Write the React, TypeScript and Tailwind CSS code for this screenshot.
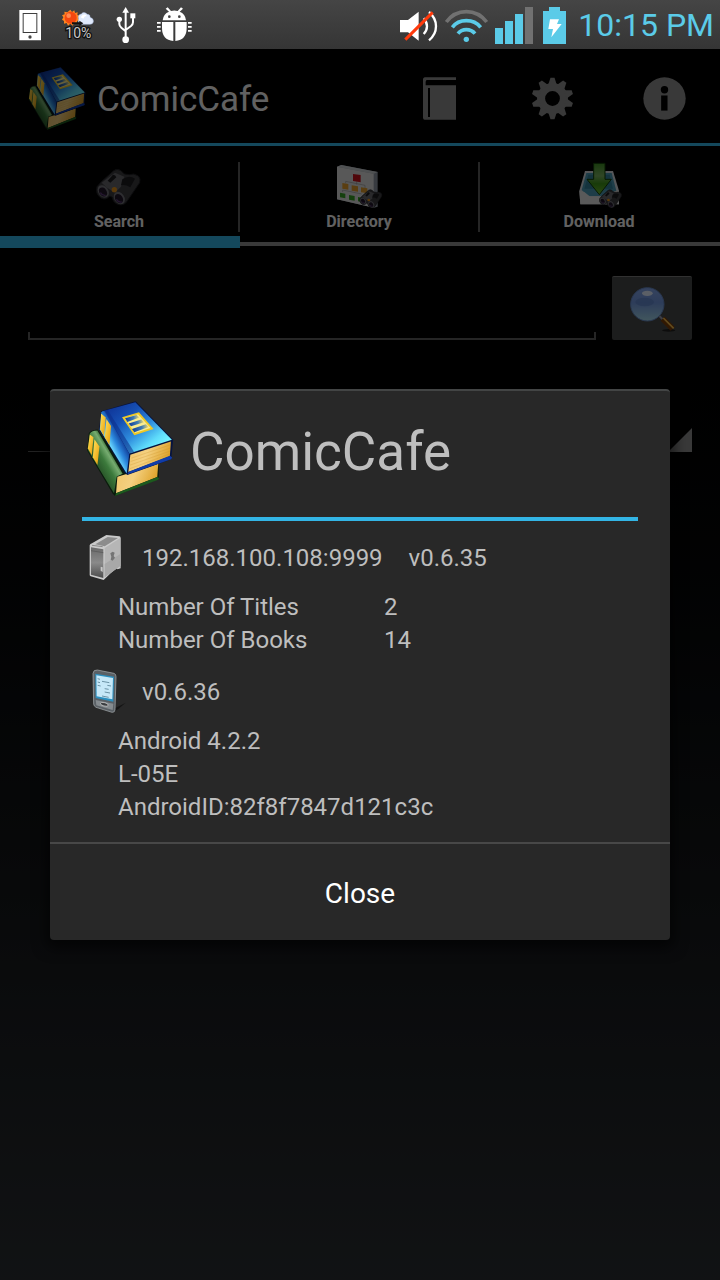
import React from "react";

function Books({ className }: { className?: string }) {
  return (
    <svg viewBox="135 60 270 295" className={className} aria-hidden="true">
      <defs>
        <linearGradient id="blueTop" x1="0.15" y1="0" x2="0.95" y2="0.75">
          <stop offset="0" stopColor="#0f3497" />
          <stop offset="0.3" stopColor="#1650b4" />
          <stop offset="0.6" stopColor="#2f8ede" />
          <stop offset="0.85" stopColor="#5fdcfb" />
          <stop offset="1" stopColor="#74f4ff" />
        </linearGradient>
        <linearGradient id="blueSpine" gradientUnits="userSpaceOnUse" x1="200" y1="205" x2="252" y2="178">
          <stop offset="0" stopColor="#2c7fd6" />
          <stop offset="0.2" stopColor="#6fdcff" />
          <stop offset="0.55" stopColor="#2a86dc" />
          <stop offset="1" stopColor="#0c2f8c" />
        </linearGradient>
        <linearGradient id="greenSpine" gradientUnits="userSpaceOnUse" x1="170" y1="250" x2="220" y2="220">
          <stop offset="0" stopColor="#2c5c2c" />
          <stop offset="0.4" stopColor="#3c7a3c" />
          <stop offset="0.75" stopColor="#76ac70" />
          <stop offset="1" stopColor="#23551f" />
        </linearGradient>
        <linearGradient id="pages" x1="0" y1="0" x2="1" y2="0.3">
          <stop offset="0" stopColor="#f0c468" />
          <stop offset="0.5" stopColor="#f4d080" />
          <stop offset="1" stopColor="#dfa42c" />
        </linearGradient>
        <linearGradient id="goldBand" x1="0" y1="0" x2="1" y2="1">
          <stop offset="0" stopColor="#ffe45c" />
          <stop offset="1" stopColor="#e89a08" />
        </linearGradient>
        <linearGradient id="slit" x1="0" y1="0" x2="1" y2="0">
          <stop offset="0" stopColor="#0f3c98" />
          <stop offset="0.6" stopColor="#3f7cb4" />
          <stop offset="1" stopColor="#f2dc70" />
        </linearGradient>
      </defs>
      <path d="M146 160Q152 151 172 149L262 268L356 250L357 297L225 349L218 342L141 212Z" fill="#0a1c0c" />
      <path d="M149 161Q155 152 172 152L248 282L230 290L222 341L144 212Z" fill="url(#greenSpine)" />
      <path d="M232 291L262 282L355 252L352 292L228 341Z" fill="url(#pages)" />
      <path d="M225 349L228 341L352 292L358 295L355 300Z" fill="#1c5a1e" />
      <path d="M149 164L160 172L155 226L143 206Z" fill="url(#goldBand)" />
      <path d="M163 178L178 200L172 256L158 232Z" fill="url(#goldBand)" />
      <path d="M183 94L287 64L400 180L394 238L262 286L254 280L177 149Z" fill="#06133f" />
      <path d="M192 92L286 67L396 180L268 221Z" fill="url(#blueTop)" />
      <path d="M184 97Q187 92 196 94L268 221L260 281L179 149Z" fill="url(#blueSpine)" />
      <path d="M192 92L203 90L282 216L268 221Z" fill="#0b2c86" opacity="0.55" />
      <path d="M183 101L197 113L192 169L180 148Z" fill="url(#goldBand)" />
      <path d="M199 117L213 138L208 196L194 173Z" fill="url(#goldBand)" />
      <path d="M271 225L393 185L390 229L265 277Z" fill="url(#pages)" />
      <path d="M274 235L391 195M272 245L391 205M270 256L390 214M269 267L390 222" stroke="#c98c20" strokeWidth="1.5" opacity="0.5" />
      <path d="M262 284L266 276L390 228L397 233L394 238Z" fill="#103ca8" />
      <path d="M246 112L297 97L341 147L283 166Z" fill="#efc825" />
      <path d="M254 115L294 103L332 144L285 159Z" fill="#f9ec90" />
      <path d="M255 115L290 105L298 113L262 126Z" fill="url(#slit)" />
      <path d="M266 131L304 119L312 127L273 139Z" fill="url(#slit)" />
      <path d="M276 147L318 133L326 141L283 157Z" fill="url(#slit)" />
    </svg>
  );
}

function StatusBar() {
  return (
    <header className="flex h-[49px] items-center bg-linear-to-b from-[#454545] to-[#353535]">
      <div className="flex gap-[18px] pl-[18px]">
        <svg viewBox="54 0 72 147" className="h-[49px] w-6" aria-label="Phone">
          <path fill="#fff" fillRule="evenodd" d="M58 30H123V121H58ZM68 39V99H112V39Z" />
          <rect x="71" y="42" width="38" height="54" fill="#fff" />
          <circle cx="90" cy="111" r="5" fill="#444" />
        </svg>
        <svg viewBox="180 0 108 147" className="h-[49px] w-9" aria-label="Weather">
          <path
            fill="#ff8420"
            d="M211 29L216 36L223 31L225 39L233 37L232 45L240 48L234 54L239 61L231 63L231 71L223 69L218 77L211 71L204 77L200 69L192 71L192 63L186 59L190 52L186 46L194 43L193 35L202 37Z"
          />
          <circle cx="212" cy="53" r="18" fill="#f4470f" />
          <circle cx="206" cy="47" r="7" fill="#ff8a50" />
          <path fill="#dfe9fb" stroke="#a9bbdf" strokeWidth="1.5" d="M236 58Q232 44 244 42Q252 33 262 43Q272 44 270 52Q282 56 280 66Q278 73 270 73H243Q232 70 236 58Z" />
          <path fill="#fff" d="M242 52Q250 38 260 47Q252 48 250 56Z" />
          <path fill="#111" d="M216 67H238V62L250 70L238 78V73H216Z" />
          <text x="235" y="113" textAnchor="middle" fontFamily="Roboto, sans-serif" fontSize="42" fill="#c8c8c8" stroke="#111" strokeWidth="8" paintOrder="stroke">
            10%
          </text>
        </svg>
        <svg viewBox="342 0 72 147" className="h-[49px] w-6" aria-label="USB" fill="none" stroke="#fff" strokeWidth="6">
          <path d="M377 36V114M358 62V72Q358 78 364 83L377 94M399 50V67Q399 73 393 78L377 90" />
          <path d="M377 21L387 38H367Z" fill="#fff" stroke="none" />
          <circle cx="377" cy="119" r="10" fill="#fff" stroke="none" />
          <circle cx="358" cy="58" r="8" fill="#fff" stroke="none" />
          <rect x="391" y="40" width="15" height="15" fill="#fff" stroke="none" />
        </svg>
        <svg viewBox="468 0 111 147" className="h-[49px] w-[37px]" aria-label="USB debugging" fill="#fff">
          <path d="M488 61Q490 41 507 35L497 26L503 22L513 33Q523 30 533 33L543 22L549 26L539 35Q556 41 558 61Z" />
          <path d="M486 66H520V123Q486 120 486 84ZM526 66H560V84Q560 120 526 123Z" />
          <path d="M471 66H482V71H471ZM471 78H482V83H471ZM471 90H482V95H471ZM564 66H575V71H564ZM564 78H575V83H564ZM564 90H575V95H564Z" />
          <circle cx="508" cy="50" r="4" fill="#444" />
          <circle cx="538" cy="50" r="4" fill="#444" />
        </svg>
      </div>
      <div className="ml-auto flex items-center gap-1 pr-[6px]">
        <svg viewBox="54 0 126 147" className="h-[49px] w-[42px]" aria-label="Sound off">
          <path fill="#fff" d="M60 60H84L116 35V122L84 97H60Z" />
          <path fill="none" stroke="#fff" strokeWidth="7" d="M131 102Q141 92 141 79T131 55M147 121Q168 104 168 79T147 36" />
          <path stroke="#ff3a0c" strokeWidth="9" d="M76 119L158 37" />
        </svg>
        <svg viewBox="192 0 138 147" className="h-[49px] w-[46px]" aria-label="Wi-Fi" fill="none" stroke="#5bcbe8" strokeWidth="11">
          <path d="M199 66Q222 35 259 35T320 66" stroke="#717171" />
          <path d="M217 82Q232 62 259 62T302 82" />
          <path d="M234 101Q243 89 259 89T285 101" />
          <circle cx="259" cy="118" r="8" fill="#5bcbe8" stroke="none" />
        </svg>
        <svg viewBox="342 0 132 147" className="h-[49px] w-11" aria-label="Signal">
          <path fill="#5bcbe8" d="M345 84H369V132H345ZM375 63H399V132H375ZM405 42H429V132H405Z" />
          <path fill="#717171" d="M435 21H459V132H435Z" />
        </svg>
        <svg viewBox="486 0 90 147" className="h-[49px] w-[30px]" aria-label="Battery charging">
          <path fill="#5bcbe8" d="M489 33H507V21H540V33H558V132H489Z" />
          <path fill="#fff" d="M510 58H537L531 72H545L514 112L519 87H505Z" />
        </svg>
        <time className="pt-[2px] pl-[2px] text-[32px] leading-[47px] text-[#5bcbe8]">10:15 PM</time>
      </div>
    </header>
  );
}

function ActionBar() {
  return (
    <div className="flex h-[97px] items-center border-b-[3px] border-[#33b5e5] bg-black pt-1 pl-[27px]">
      <Books className="h-[65px] w-[60px]" />
      <h1 className="ml-[10px] flex-1 pt-1 text-[35px] text-[#f3f3f3]">ComicCafe</h1>
      <button className="flex h-full w-28 items-center justify-center" aria-label="Books">
        <svg viewBox="96 48 108 135" className="h-[45px] w-9">
          <path fill="#8e8e8e" fillRule="evenodd" d="M104 52H198V60H110Q107 62 107 66V76H198V179H104Q99 179 99 173V58Q99 53 104 52ZM114 84V171H120V84Z" />
        </svg>
      </button>
      <button className="flex h-full w-28 items-center justify-center" aria-label="Settings">
        <svg viewBox="-64 -64 128 128" className="h-[43px] w-[43px]" fill="#8e8e8e">
          <path fillRule="evenodd" d="M0-46A46 46 0 0 1 0 46A46 46 0 0 1 0-46ZM0-22A22 22 0 0 0 0 22A22 22 0 0 0 0-22Z" />
          {[0, 36, 72, 108, 144, 180, 216, 252, 288, 324].map((angle) => (
            <path key={angle} d="M-13-40L-6-62H6L13-40Z" transform={`rotate(${angle})`} />
          ))}
        </svg>
      </button>
      <button className="flex h-full w-28 items-center justify-center" aria-label="Information">
        <svg viewBox="757 50 128 128" className="h-[43px] w-[43px]">
          <circle cx="821" cy="114" r="63" fill="#8e8e8e" />
          <circle cx="821" cy="88" r="11" fill="#000" />
          <path d="M811 105H830V150H811Z" fill="#000" />
        </svg>
      </button>
    </div>
  );
}

function BinocularShape() {
  return (
    <>
      <path fill="#3c3c40" stroke="#1e1e22" strokeWidth="3" d="M290 140L302 126L340 92Q350 84 362 92L372 102L388 104Q400 98 414 108Q422 116 418 128L380 184Q372 197 356 194Q338 190 336 172L328 168Q318 182 302 174Q284 162 290 140Z" />
      <path fill="#66666b" d="M304 128L344 98L372 110L362 140L344 158L318 142Z" />
      <path fill="#1c1c20" d="M366 118Q386 104 404 116L390 142Q374 132 362 136ZM322 122L338 104Q346 104 348 112L330 128Z" />
      <ellipse cx="309" cy="154" rx="15" ry="20" fill="#73737a" transform="rotate(-35 309 154)" />
      <ellipse cx="308" cy="156" rx="11" ry="15" fill="#22182a" transform="rotate(-35 308 156)" />
      <ellipse cx="357" cy="174" rx="15" ry="20" fill="#73737a" transform="rotate(-35 357 174)" />
      <ellipse cx="356" cy="176" rx="11" ry="15" fill="#22182a" transform="rotate(-35 356 176)" />
      <path d="M300 158Q306 168 316 166M348 178Q354 188 364 186" stroke="#5c3a78" strokeWidth="4" fill="none" />
      <circle cx="342" cy="149" r="8" fill="#e0901a" />
    </>
  );
}

function SearchIcon() {
  return (
    <svg viewBox="284 66 144 144" className="size-12 shrink-0" aria-hidden="true">
      <BinocularShape />
    </svg>
  );
}

function DirectoryIcon() {
  return (
    <svg viewBox="45 66 144 144" className="size-12 shrink-0" aria-hidden="true">
      <path d="M51 80L64 75L173 96V200L162 203L51 178Z" fill="#8c95a0" />
      <path d="M51 80L64 75L173 96L161 101Z" fill="#c6cace" />
      <path d="M51 80L161 101V203L51 178Z" fill="#dcdcdc" />
      <path d="M110 124V134M77 130V124L135 136V146M68 156V150L125 162" stroke="#9a9a9a" strokeWidth="2" fill="none" />
      <path d="M99 102L122 105V127L99 123Z" fill="#c8121c" />
      <path d="M67 129L85 132V149L67 146ZM95 136L114 139V155L95 152ZM123 142L142 145V160L123 157Z" fill="#e09c2c" />
      <path d="M60 158L76 161V175L60 172ZM87 165L104 168V182L87 179ZM114 171L130 174V187L114 184Z" fill="#36a024" />
      <g transform="translate(-28 104) scale(0.51)">
        <BinocularShape />
      </g>
    </svg>
  );
}

function DownloadIcon() {
  return (
    <svg viewBox="768 66 144 144" className="size-12 shrink-0" aria-hidden="true">
      <defs>
        <linearGradient id="arrow" x1="0" y1="0" x2="0" y2="1">
          <stop offset="0" stopColor="#3f8f24" />
          <stop offset="0.4" stopColor="#7ab060" />
          <stop offset="0.65" stopColor="#3d9418" />
          <stop offset="1" stopColor="#6fb82c" />
        </linearGradient>
      </defs>
      <path d="M798 93H882L900 152V193H784L781 152Z" fill="#d4d8dc" />
      <path d="M802 99H878L892 152L874 168H806L788 150Z" fill="#4c9ab4" />
      <path d="M808 104H872L882 146H796Z" fill="#337f9a" />
      <path d="M781 152L796 156L814 170H872L886 154L900 152V193H784Z" fill="#e0e0e0" />
      <path d="M824 70H858V118H877L841 164L804 118H824Z" fill="url(#arrow)" stroke="#123f08" strokeWidth="3" />
      <g transform="translate(694 104) scale(0.51)">
        <BinocularShape />
      </g>
    </svg>
  );
}

function Tab({ label, icon, active, divider }: { label: string; icon: React.ReactNode; active?: boolean; divider?: boolean }) {
  return (
    <button role="tab" aria-selected={!!active} className="flex h-[102px] flex-col">
      <span className={"mt-4 flex h-[70px] w-full flex-col items-center border-r-2 " + (divider ? "border-[#5c5c5c]" : "border-transparent")}>
        {icon}
        <span className="text-[16px] leading-6 font-bold text-[#f3f3f3]">{label}</span>
      </span>
      {active ? <span className="mt-1 h-3 w-full bg-[#33b5e5]" /> : <span className="mt-[10px] h-1 w-full bg-[#8e8e8e]" />}
    </button>
  );
}

function SearchForm() {
  return (
    <form className="px-7 pt-7">
      <div className="flex items-end gap-4">
        <div className="flex-1">
          <input aria-label="Search title" className="block h-14 w-full bg-transparent px-3 text-[28px] text-white outline-none" />
          <div className="h-2 border-x-2 border-b-2 border-[#5c5c5c]" />
        </div>
        <button type="button" aria-label="Search" className="flex h-16 w-20 items-center justify-center rounded-[2px] border-t border-[#7a7a7a] bg-[#484a49] pl-[2px]">
          <svg viewBox="144 72 150 150" className="size-[50px]">
            <defs>
              <linearGradient id="lens" x1="0" y1="0" x2="0" y2="1">
                <stop offset="0" stopColor="#86a8ec" />
                <stop offset="0.45" stopColor="#7298e0" />
                <stop offset="1" stopColor="#a4d8ea" />
              </linearGradient>
            </defs>
            <ellipse cx="266" cy="211" rx="20" ry="4" fill="#222" />
            <path d="M238 168L250 180" stroke="#99a" strokeWidth="6" />
            <path d="M248 176L278 206" stroke="#7a3c06" strokeWidth="17" />
            <path d="M250 174L281 205" stroke="#f2bc4c" strokeWidth="5" />
            <circle cx="202" cy="133" r="50" fill="url(#lens)" stroke="#6488c4" strokeWidth="3" />
            <ellipse cx="194" cy="126" rx="28" ry="13" fill="#5f86cc" opacity="0.7" />
            <ellipse cx="202" cy="100" rx="16" ry="8" fill="#e4eeff" />
          </svg>
        </button>
      </div>
      <div className="mt-[88px] flex h-6 items-end">
        <select aria-label="Category" className="h-6 min-w-0 flex-1 appearance-none border-b border-[#565656] bg-transparent text-white outline-none" />
        <svg viewBox="0 0 24 24" className="size-6" aria-hidden="true">
          <path d="M24 0V24H0Z" fill="#8e8e8e" />
        </svg>
      </div>
    </form>
  );
}

function ServerIcon() {
  return (
    <svg viewBox="84 39 108 147" className="h-[49px] w-9" aria-hidden="true">
      <defs>
        <linearGradient id="front" x1="0" y1="0" x2="0" y2="1">
          <stop offset="0" stopColor="#6a6a6a" />
          <stop offset="0.5" stopColor="#8a8a8a" />
          <stop offset="1" stopColor="#4c4c4c" />
        </linearGradient>
      </defs>
      <path d="M89 76Q90 71 96 70L139 45L178 49Q182 50 182 54V145L173 148L168 144L131 180L92 169Q89 168 89 164Z" fill="#cacaca" />
      <path d="M106 73L143 51L174 54L134 79Z" fill="#8c8c8c" />
      <path d="M134 84L181 54V138L134 172Z" fill="#b6b6b6" />
      <path d="M134 132L181 102V138L134 172Z" fill="#a8a8a8" />
      <path d="M93 82L130 88V174L93 164Z" fill="url(#front)" />
      <path d="M93 92L130 98" stroke="#555" strokeWidth="2" />
      <path d="M96 76L128 80" stroke="#8a8a8a" strokeWidth="3" />
      <path d="M151 100L158 95L164 98L161 108L165 113L158 122L152 119L154 110Z" fill="#747474" />
      <path d="M122 140V152L128 156V142Z" fill="#c8c8c8" />
    </svg>
  );
}

function HandsetIcon() {
  return (
    <svg viewBox="93 441 108 147" className="h-[49px] w-9" aria-hidden="true">
      <path d="M150 572L197 548L176 566L160 577Z" fill="#151515" />
      <path d="M99 460Q100 449 112 450L162 460Q168 462 168 470L165 570Q164 578 156 577L108 562Q101 558 101 552Z" fill="#5a6065" stroke="#aab0b4" strokeWidth="2" />
      <path d="M106 461L162 470L160 545L107 534Z" fill="#2b8fbf" />
      <path d="M109 466L159 474L157 538L110 529Z" fill="#c6e8f8" />
      <path d="M113 476L120 478M113 486L120 488M113 496L122 498M126 484L148 488M142 496L153 498M134 506L146 508M134 516L150 519M126 528L146 532" stroke="#6b93a6" strokeWidth="3" />
      <path d="M107 540L160 551L158 570L109 556Z" fill="#858b8f" />
      <ellipse cx="133" cy="553" rx="12" ry="5" fill="#3a3d40" stroke="#d4d4d4" strokeWidth="2" transform="rotate(14 133 553)" />
    </svg>
  );
}

function AboutDialog() {
  return (
    <div role="dialog" aria-labelledby="about-title" className="w-full rounded-[4px] border-t-2 border-[#434545] bg-[#282828] text-[24px] leading-[33px] text-[#bebebe] shadow-[0_4px_14px_4px_rgba(0,0,0,0.6)]">
      <div className="mx-8 flex h-[130px] items-center border-b-4 border-[#33b5e5] pl-[3px]">
        <Books className="mb-[10px] h-[98px] w-[90px]" />
        <h2 id="about-title" className="mb-1 ml-[15px] text-[53px] leading-none">
          ComicCafe
        </h2>
      </div>
      <div className="px-8 pt-[2px] pb-[18px]">
        <div className="flex h-[68px] items-center pl-[6px]">
          <ServerIcon />
          <p className="ml-[18px] flex gap-[26px] pt-[2px]">
            <span>192.168.100.108:9999</span>
            <span>v0.6.35</span>
          </p>
        </div>
        <dl className="grid grid-cols-[266px_1fr] pl-9">
          <dt>Number Of Titles</dt>
          <dd>2</dd>
          <dt>Number Of Books</dt>
          <dd>14</dd>
        </dl>
        <div className="flex h-[68px] items-center pl-[9px]">
          <HandsetIcon />
          <p className="ml-[15px] pt-[2px]">v0.6.36</p>
        </div>
        <div className="pl-9">
          <p>Android 4.2.2</p>
          <p>L-05E</p>
          <p>AndroidID:82f8f7847d121c3c</p>
        </div>
      </div>
      <button className="block h-[98px] w-full border-t-2 border-[#484848] pt-[2px] text-center text-[28px] text-white">Close</button>
    </div>
  );
}

export default function App() {
  return (
    <div className="flex min-h-screen flex-col bg-black font-[Roboto,sans-serif]">
      <StatusBar />
      <div className="relative flex flex-1 flex-col bg-linear-to-b from-black to-[#2b2f33]">
        <ActionBar />
        <div role="tablist" className="grid grid-cols-3">
          <Tab label="Search" icon={<SearchIcon />} active divider />
          <Tab label="Directory" icon={<DirectoryIcon />} divider />
          <Tab label="Download" icon={<DownloadIcon />} />
        </div>
        <SearchForm />
        <div className="absolute inset-0 flex items-center justify-center bg-black/60 px-[50px]">
          <AboutDialog />
        </div>
      </div>
    </div>
  );
}
